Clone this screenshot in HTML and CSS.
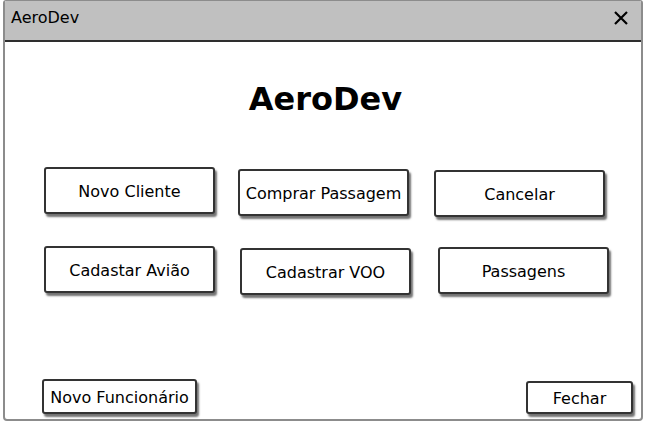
FILE: index.html
```html
<!DOCTYPE html>
<html>
<head>
<meta charset="utf-8">
<link rel="stylesheet" href="styles.css">
</head>
<body>
<div class="window">
  <div class="titlebar">
    <span class="title">AeroDev</span>
    <svg class="close" width="16" height="16" viewBox="0 0 16 16"><path d="M2 2 L14 14 M14 2 L2 14" stroke="#000" stroke-width="2.2" fill="none"/></svg>
  </div>
  <div class="content">
    <h1 class="heading">AeroDev</h1>
    <div class="grid">
      <button class="btn">Novo Cliente</button>
      <button class="btn r1c2">Comprar Passagem</button>
      <button class="btn r1c3">Cancelar</button>
      <button class="btn r2c1">Cadastar Avião</button>
      <button class="btn r2c2">Cadastrar VOO</button>
      <button class="btn r2c3">Passagens</button>
    </div>
    <div class="footer">
      <button class="btn small func">Novo Funcionário</button>
      <button class="btn small fechar">Fechar</button>
    </div>
  </div>
</div>
</body>
</html>
```
FILE: styles.css
```css
html, body {
  margin: 0;
  padding: 0;
  background: #fff;
}
body {
  font-family: "DejaVu Sans", sans-serif;
}
.window {
  margin-left: 3px;
  width: 640px;
  height: 421px;
  box-sizing: border-box;
  border: 2px solid #8c8c8c;
  border-top: 1px solid #8c8c8c;
  border-radius: 3px 3px 4px 4px;
  display: flex;
  flex-direction: column;
  overflow: hidden;
}
.titlebar {
  height: 39px;
  background: #c0c0c0;
  border-bottom: 2px solid #2e2e2e;
  display: flex;
  align-items: center;
  justify-content: space-between;
  padding: 0 12px 0 6px;
  flex: none;
}
.title {
  font-size: 16px;
  color: #000;
  margin-top: -7px;
}
.close {
  margin-top: -6px;
}
.content {
  flex: 1;
  display: flex;
  flex-direction: column;
  position: relative;
}
.heading {
  margin: 38px 0 0 0;
  font-size: 32px;
  line-height: 38px;
  font-weight: bold;
  text-align: center;
  color: #000;
  padding-left: 5px;
}
.grid {
  margin: 49px 0 0 39px;
  display: grid;
  grid-template-columns: 171px 171px 171px;
  column-gap: 23px;
  row-gap: 30px;
}
.btn {
  font-family: "DejaVu Sans", sans-serif;
  font-size: 16px;
  color: #000;
  background: #fff;
  border: 2px solid #333;
  border-radius: 3px;
  box-shadow: 2px 3px 2px rgba(0,0,0,0.55);
  height: 47px;
  width: 171px;
  padding: 2px 0 0 0;
  box-sizing: border-box;
}
.r1c2 { margin-top: 2px; }
.r1c3 { margin-top: 3px; margin-left: 2px; }
.r2c1 { margin-top: -1px; }
.r2c2 { margin-top: 1px; margin-left: 2px; }
.r2c3 { margin-left: 6px; }
.footer {
  margin-top: auto;
  display: flex;
  justify-content: space-between;
  align-items: flex-end;
  padding: 0 8px 5px 37px;
}
.small {
  height: 35px;
}
.func {
  width: 155px;
}
.fechar {
  width: 107px;
  height: 33px;
}
```
